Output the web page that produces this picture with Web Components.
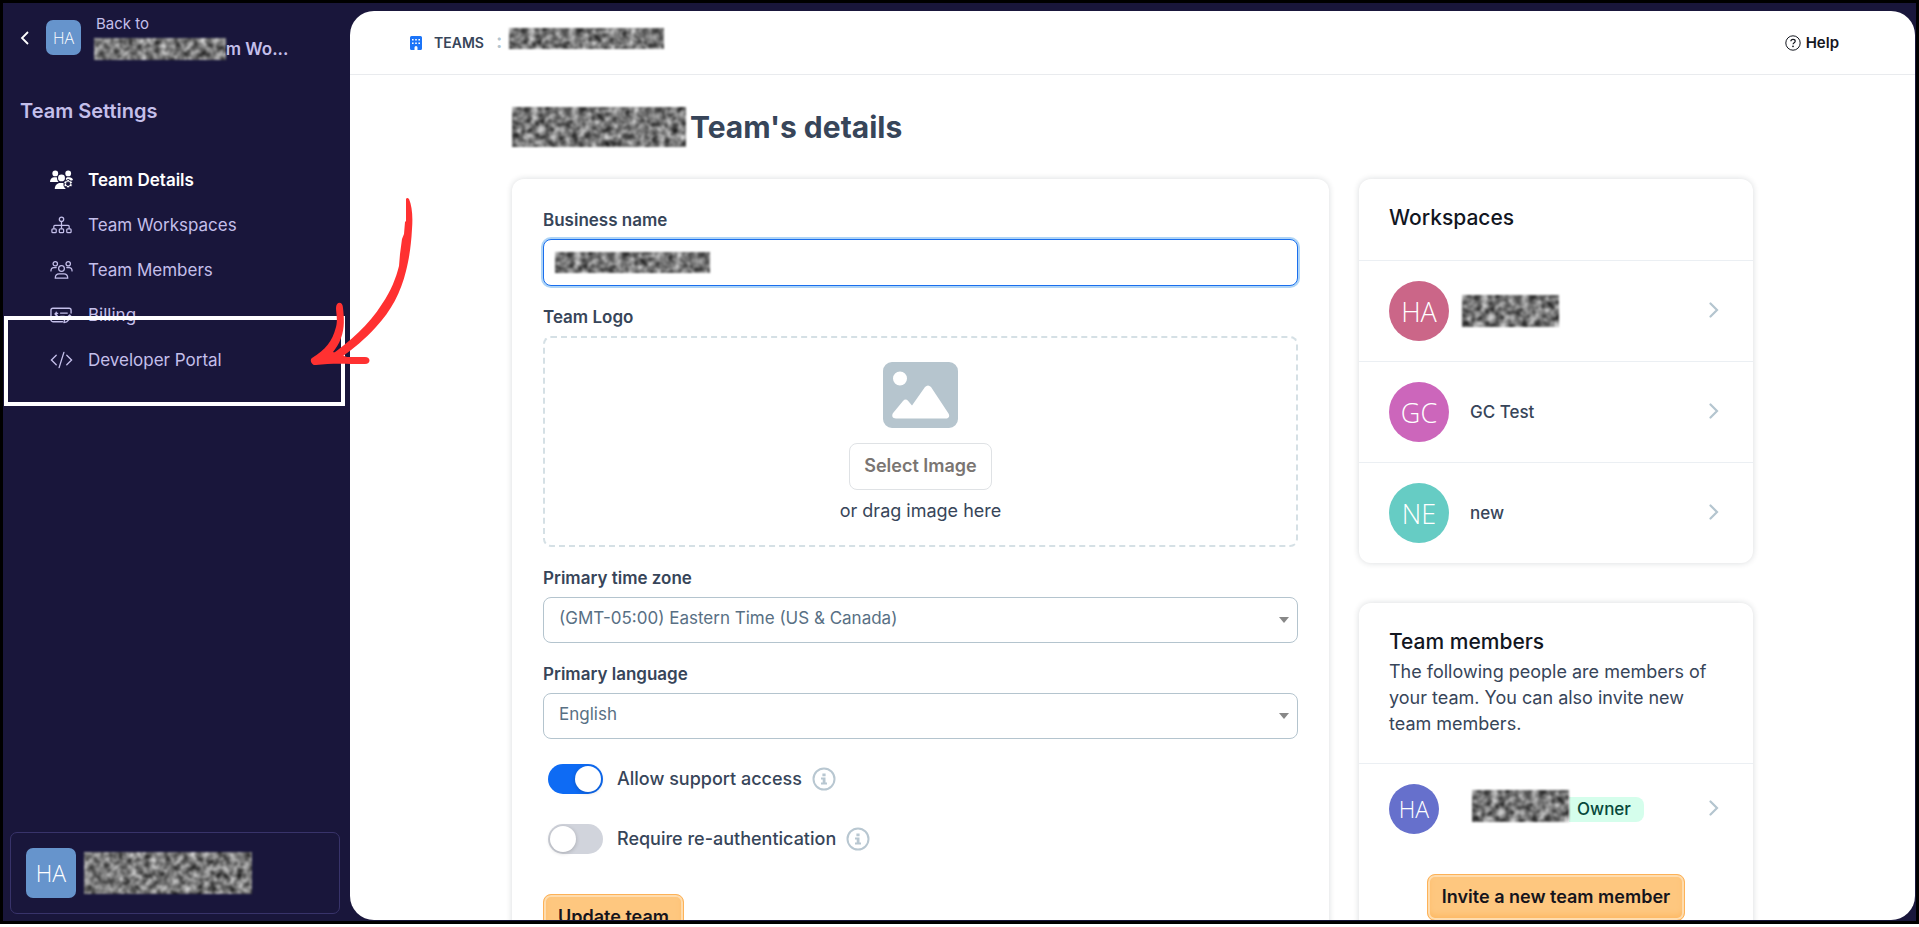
<!DOCTYPE html>
<html lang="en">
<head>
<meta charset="utf-8">
<title>Team Settings</title>
<style>
    body {
        margin: 0;
        background: #fff;
        color: #374559;
        font-family: Inter, "Open Sans", sans-serif;
        font-size: 17px;
        line-height: 20px;
    }
</style>
</head>
<body>
<team-page></team-page>

<script>
const ICONS = {
    back: ['0 0 10 16', '<path d="M8 2 2 8l6 6" fill="none" stroke="currentColor" stroke-width="1.800"/>'],
    next: ['0 0 10 16', '<path d="M1.5 1.5 8 8l-6.500 6.500" fill="none" stroke="currentColor" stroke-width="2.200" stroke-linecap="round"/>'],
    building: ['0 0 12 16', '<path fill="currentColor" fill-rule="evenodd" d="M1.500 1h9A1.500 1.500 0 0 1 12 2.500v11a1.500 1.500 0 0 1-1.500 1.500H7.500v-2.500a1.500 1.500 0 0 0-3 0V15h-3A1.500 1.500 0 0 1 0 13.500v-11A1.500 1.500 0 0 1 1.500 1zM2 4v1.600h1.600V4zm3.200 0v1.600h1.600V4zm3.200 0v1.600H10V4zM2 7.500v1.600h1.600V7.500zm3.200 0v1.600h1.600V7.500zm3.200 0v1.600H10V7.500z"/>'],
    help: ['0 0 16 16', '<g fill="none" stroke="currentColor"><circle cx="8" cy="8" r="7.200"/><path d="M5.900 6.300c0-1.200.9-1.900 2.100-1.900s2.200.7 2.200 1.800c0 1.500-2.100 1.500-2.100 3" stroke-width="1.200"/></g><circle cx="8" cy="11.300" r=".9" fill="currentColor"/>'],
    info: ['0 0 24 24', '<circle cx="12" cy="12" r="10.500" fill="none" stroke="currentColor" stroke-width="2"/><path fill="currentColor" d="M10.400 6.500h3.200v2.700h-3.200zM9 10.500h4.500v5H15v2H9v-2h1.700v-3H9z"/>'],
    image: ['0 0 75 66', '<path fill="currentColor" fill-rule="evenodd" d="M9 0h57a9 9 0 0 1 9 9v48a9 9 0 0 1-9 9H9a9 9 0 0 1-9-9V9a9 9 0 0 1 9-9zm8 9.500a7 7 0 1 0 0 14 7 7 0 0 0 0-14zM20 39 10.500 50.500C8 53.500 9.500 56.500 13 56.500h50c3 0 4-2.500 2.500-5L48 25q-3-3-6 0L29 43.500 25 38.700q-2.500-2.500-5 .3z"/>'],
    details: ['0 0 24 20', '<g fill="currentColor"><circle cx="5.500" cy="3.200" r="3"/><circle cx="19" cy="3.200" r="3"/><circle cx="12" cy="7.800" r="3.600"/><path d="M0 12c0-3.300 2-5 4.500-5H7c.6 0 0 3 2 5zM16.500 9c.2-1.500 1-2 2-2H20c2.200 0 3.500 1 4 3l-2.500 1-2-2-2 2zM5 19.500c0-4 2.500-6.500 5.500-6.500H14l.5 4 2 2.500z"/><path stroke="#19163b" stroke-width=".8" fill-rule="evenodd" d="m18 9.500 2 .1.600 1.500 1.500-.3 1.200 1.700-1 1.300 1 1.500-1.200 1.700-1.600-.3-.7 1.500h-2l-.6-1.500-1.700.3-1-1.700 1-1.500-1-1.300 1-1.700 1.700.3zm.9 2.500a1.900 1.900 0 1 0 0 3.800 1.900 1.900 0 0 0 0-3.800z"/></g>'],
    sitemap: ['0 0 24 20', '<g fill="none" stroke="currentColor" stroke-width="1.300"><circle cx="12" cy="4" r="2.300"/><path d="M12 6.500V14M4 14v-2.500a1 1 0 0 1 1-1h14a1 1 0 0 1 1 1V14"/><rect x="2" y="14" width="4.500" height="4" rx="1"/><rect x="9.700" y="14" width="4.500" height="4" rx="1"/><rect x="17.500" y="14" width="4.500" height="4" rx="1"/></g>'],
    people: ['0 0 24 20', '<g fill="none" stroke="currentColor" stroke-width="1.300" stroke-linecap="round"><circle cx="5.500" cy="3.500" r="2.300"/><circle cx="19" cy="3.500" r="2.300"/><circle cx="12" cy="8.500" r="3"/><path d="M1 11c0-2.500 1.500-3.500 3-3.500h2.500M23 11c0-2.500-1.500-3.500-3-3.500h-2.500M5.500 18.500c0-3.500 2-4.500 4-4.500h5c2 0 4 1 4 4.500z"/></g>'],
    billing: ['0 0 24 20', '<g fill="none" stroke="currentColor" stroke-width="1.400" stroke-linecap="round" stroke-linejoin="round"><path d="M13 17H3a2 2 0 0 1-2-2V5a2 2 0 0 1 2-2h17a2 2 0 0 1 2 2v3M11 8h7M11 11.500h4M6.500 7v6M8 8.300c-3-1-3.500 1.200-1.500 1.700s1.500 2.500-1.500 1.700M14.500 18l.7-3 5.300-5 2 2-5.300 5.200z"/></g>'],
    code: ['0 0 24 20', '<path d="M6.500 5 1.500 10l5 5M17.500 5l5 5-5 5M14.500 2l-5 16" fill="none" stroke="currentColor" stroke-width="1.400" stroke-linecap="round"/>'],
    caret: ['0 0 10 6', '<path d="M0 0h10L5 6z" fill="currentColor"/>']
};

class BaseElement extends HTMLElement {
    constructor() {
        super();
        this.attachShadow({ mode: 'open' });
    }
    connectedCallback() {
        this.shadowRoot.innerHTML = `<style>${this.constructor.styles}</style>${this.markup()}`;
    }
    static get styles() {
        return '';
    }
    markup() {
        return '<slot></slot>';
    }
}

class TeamIcon extends BaseElement {
    static get styles() {
        return /*CSS*/ `
            :host { display: inline-flex; flex: none; }
            svg { display: block; width: 100%; height: 100%; }
        `;
    }
    markup() {
        const [box, body] = ICONS[this.getAttribute('name')];
        return `<svg viewBox="${box}" aria-hidden="true">${body}</svg>`;
    }
}

// Grey noise that covers a private name
class HiddenName extends BaseElement {
    static get styles() {
        return /*CSS*/ `
            :host { display: block; flex: none; filter: blur(1px); }
            svg { display: block; width: 100%; height: 100%; }
        `;
    }
    markup() {
        return /*HTML*/ `
            <svg aria-hidden="true">
                <filter id="noise" x="0" y="0" width="100%" height="100%" color-interpolation-filters="sRGB">
                    <feTurbulence type="fractalNoise" baseFrequency="0.15" numOctaves="2" seed="${this.getAttribute('seed') || 4}"/>
                    <feColorMatrix values="1.1 0 0 0 -0.08  1.1 0 0 0 -0.08  1.1 0 0 0 -0.08  0 0 0 0 1"/>
                </filter>
                <rect width="100%" height="100%" filter="url(#noise)"/>
            </svg>`;
    }
}

class UserAvatar extends BaseElement {
    static get styles() {
        return /*CSS*/ `
            :host {
                display: grid;
                flex: none;
                place-items: center;
                width: 50px;
                height: 50px;
                border-radius: 50%;
                background: #6694cc;
                color: #fff;
                font: 300 23px/1 "Open Sans", sans-serif;
            }
            :host([size="small"]) { width: 35px; height: 35px; font-size: 16px; }
            :host([size="large"]) { width: 60px; height: 60px; font-size: 27px; }
            :host([square]) { border-radius: 7px; }
        `;
    }
}

class NavItem extends BaseElement {
    static get styles() {
        return /*CSS*/ `
            :host { display: block; }
            a {
                display: flex;
                align-items: center;
                gap: 15px;
                height: 45px;
                color: #c4bfea;
                text-decoration: none;
            }
            team-icon { width: 23px; height: 20px; }
            :host([active]) a { color: #fff; font-weight: 600; }
        `;
    }
    markup() {
        return `<a href="#"><team-icon name="${this.getAttribute('icon')}"></team-icon><slot></slot></a>`;
    }
}

class TeamSidebar extends BaseElement {
    static get styles() {
        return /*CSS*/ `
            :host {
                display: flex;
                flex-direction: column;
                box-sizing: border-box;
                padding: 12px 10px 7px 7px;
                color: #c4bfea;
            }
            .back {
                display: flex;
                align-items: center;
                padding-left: 10px;
                color: inherit;
                text-decoration: none;
            }
            .back team-icon { width: 10px; height: 16px; margin-right: 16px; color: #fff; }
            .back user-avatar { margin-right: 13px; }
            .from { display: block; margin-bottom: 5px; padding-left: 2px; font-size: 15px; line-height: 18px; }
            .space { display: flex; align-items: center; font-weight: 600; }
            .space span { margin-left: -10px; }
            .space hidden-name { z-index: 1; width: 132px; height: 22px; }
            h2 { margin: 39px 10px 0; font-size: 20px; line-height: 24px; font-weight: 600; }
            nav { margin: 34px 0 0 40px; }
            .user {
                display: flex;
                align-items: center;
                gap: 8px;
                margin-top: auto;
                padding: 15px;
                border: 1px solid #38336a;
                border-radius: 7px;
            }
            .user hidden-name { width: 168px; height: 42px; }
        `;
    }
    markup() {
        return /*HTML*/ `
            <a class="back" href="#">
                <team-icon name="back"></team-icon>
                <user-avatar square size="small">HA</user-avatar>
                <div>
                    <span class="from">Back to</span>
                    <div class="space"><hidden-name seed="7"></hidden-name><span>am Wo...</span></div>
                </div>
            </a>
            <h2>Team Settings</h2>
            <nav>
                <nav-item icon="details" active>Team Details</nav-item>
                <nav-item icon="sitemap">Team Workspaces</nav-item>
                <nav-item icon="people">Team Members</nav-item>
                <nav-item icon="billing">Billing</nav-item>
                <nav-item icon="code">Developer Portal</nav-item>
            </nav>
            <div class="user"><user-avatar square>HA</user-avatar><hidden-name seed="7"></hidden-name></div>`;
    }
}

class TeamTopbar extends BaseElement {
    static get styles() {
        return /*CSS*/ `
            :host {
                display: flex;
                align-items: center;
                box-sizing: border-box;
                height: 64px;
                padding: 0 76px 0 60px;
                border-bottom: 1px solid #e9ebee;
            }
            .home { display: flex; align-items: center; gap: 12px; color: inherit; font-size: 14px; font-weight: 600; text-decoration: none; }
            .home team-icon { width: 12px; height: 16px; color: #1b74f8; }
            .dots { margin: 0 7px 4px 12px; color: #b4c5cf; font-size: 20px; font-weight: 600; }
            hidden-name { width: 155px; height: 21px; margin-bottom: 8px; }
            button {
                display: flex;
                align-items: center;
                gap: 5px;
                margin-left: auto;
                padding: 0;
                border: 0;
                background: none;
                color: #14171f;
                font: 600 15px/20px Inter, sans-serif;
            }
            button team-icon { width: 16px; height: 16px; }
        `;
    }
    markup() {
        return /*HTML*/ `
            <a class="home" href="#"><team-icon name="building"></team-icon>TEAMS</a>
            <span class="dots">:</span>
            <hidden-name></hidden-name>
            <button type="button"><team-icon name="help"></team-icon>Help</button>`;
    }
}

class TeamCard extends BaseElement {
    static get styles() {
        return /*CSS*/ `
            :host {
                display: block;
                border-radius: 12px;
                background: #fff;
                box-shadow: 0 0 6px rgba(20, 30, 45, .16);
            }
            header { box-sizing: border-box; min-height: 81px; padding: 26px 30px; }
            h2 { margin: 0; color: #12161f; font-size: 21px; line-height: 26px; font-weight: 500; }
            ::slotted(p) { margin: 4px 0 0; font-size: 18px; line-height: 26px; }
        `;
    }
    markup() {
        const heading = this.getAttribute('heading');
        const top = heading ? `<header><h2>${heading}</h2><slot name="intro"></slot></header>` : '';
        return `${top}<slot></slot>`;
    }
}

class ListRow extends BaseElement {
    static get styles() {
        return /*CSS*/ `
            :host {
                display: flex;
                align-items: center;
                gap: 13px;
                padding: 20px 34px 20px 30px;
                border-top: 1px solid #ebeff3;
                font-weight: 500;
            }
            team-icon { width: 10px; height: 16px; margin: 0 0 3px auto; color: #b4c5cf; }
            ::slotted(hidden-name) { width: 97px; height: 32px; }
            ::slotted(span) { padding-left: 8px; }
        `;
    }
    markup() {
        return '<slot></slot><team-icon name="next"></team-icon>';
    }
}

class OwnerName extends BaseElement {
    static get styles() {
        return /*CSS*/ `
            :host { display: flex; align-items: center; padding-left: 20px; }
            hidden-name { width: 97px; height: 32px; margin-bottom: 6px; z-index: 1; }
            span {
                padding: 0 13px 0 8px;
                border-radius: 0 8px 8px 0;
                background: #d5feec;
                color: #07483b;
                line-height: 25px;
            }
        `;
    }
    markup() {
        return '<hidden-name></hidden-name><span><slot></slot></span>';
    }
}

class ActionButton extends BaseElement {
    static get styles() {
        return /*CSS*/ `
            :host { display: inline-block; }
            button {
                height: 47px;
                padding: 0 14px 2px;
                border: 1px solid #fdb258;
                border-radius: 8px;
                background: #fec77f;
                box-shadow: inset 0 0 0 2px #fedcae, inset 0 -4px 6px #fdb760;
                color: #15141c;
                font: 600 18px/20px Inter, sans-serif;
            }
            :host([plain]) button {
                border-color: #dfe2e5;
                background: #fff;
                box-shadow: none;
                color: #7a7572;
            }
        `;
    }
    markup() {
        return '<button type="button"><slot></slot></button>';
    }
}

const FIELD_CSS = /*CSS*/ `
    :host { display: block; }
    label, .label { display: block; margin-bottom: 9px; font-weight: 600; }
`;

class NameField extends BaseElement {
    static get styles() {
        return /*CSS*/ `
            ${FIELD_CSS}
            .box { display: grid; align-items: center; }
            .box > * { grid-area: 1 / 1; }
            input {
                box-sizing: border-box;
                width: 100%;
                height: 47px;
                border: 1px solid #1a6fee;
                border-radius: 8px;
                outline: 0;
                box-shadow: 0 0 0 2px #aed4f6;
            }
            hidden-name { width: 155px; height: 21px; margin-left: 12px; }
        `;
    }
    markup() {
        return /*HTML*/ `
            <label for="name">Business name</label>
            <div class="box"><input id="name" type="text"><hidden-name></hidden-name></div>`;
    }
}

class SelectField extends BaseElement {
    static get styles() {
        return /*CSS*/ `
            ${FIELD_CSS}
            .box { display: grid; align-items: center; }
            .box > * { grid-area: 1 / 1; }
            select {
                appearance: none;
                width: 100%;
                height: 46px;
                padding: 0 30px 4px 15px;
                border: 1px solid #b4c4ce;
                border-radius: 8px;
                background: #fff;
                color: #587084;
                font: inherit;
            }
            team-icon { justify-self: end; width: 10px; height: 6px; margin-right: 9px; color: #888; pointer-events: none; }
        `;
    }
    markup() {
        return /*HTML*/ `
            <label for="choice">${this.getAttribute('label')}</label>
            <div class="box">
                <select id="choice"><option>${this.getAttribute('value')}</option></select>
                <team-icon name="caret"></team-icon>
            </div>`;
    }
}

class LogoField extends BaseElement {
    static get styles() {
        return /*CSS*/ `
            ${FIELD_CSS}
            .drop {
                display: flex;
                flex-direction: column;
                align-items: center;
                padding: 24px;
                border: 2px dashed #d5e0e5;
                border-radius: 8px;
                font-size: 18px;
            }
            team-icon { width: 75px; height: 66px; margin-bottom: 15px; color: #b6c5ce; }
            action-button { margin-bottom: 11px; height: 47px; }
        `;
    }
    markup() {
        return /*HTML*/ `
            <span class="label">Team Logo</span>
            <div class="drop">
                <team-icon name="image"></team-icon>
                <action-button plain>Select Image</action-button>
                <span>or drag image here</span>
            </div>`;
    }
}

class ToggleField extends BaseElement {
    static get styles() {
        return /*CSS*/ `
            :host { display: flex; align-items: center; padding-left: 5px; font-size: 18px; font-weight: 500; }
            input {
                appearance: none;
                display: flex;
                align-items: center;
                width: 55px;
                height: 30px;
                margin: 0 14px 0 0;
                padding: 0 2px;
                box-sizing: border-box;
                border-radius: 15px;
                background: #d1d4dc;
            }
            input::before {
                content: "";
                width: 26px;
                height: 26px;
                border-radius: 50%;
                background: #fff;
                box-shadow: 0 1px 4px rgba(0, 0, 0, .2);
            }
            input:checked { justify-content: flex-end; background: #0e6bf4; }
            team-icon { width: 24px; height: 24px; margin-left: 10px; color: #b8c7d1; }
        `;
    }
    markup() {
        return /*HTML*/ `
            <input id="toggle" type="checkbox" ${this.hasAttribute('checked') ? 'checked' : ''}>
            <label for="toggle"><slot></slot></label>
            <team-icon name="info"></team-icon>`;
    }
}

class TeamForm extends BaseElement {
    static get styles() {
        return /*CSS*/ `
            :host { display: block; padding: 31px; }
            form { display: flex; flex-direction: column; gap: 21px; }
            .toggles { display: flex; flex-direction: column; gap: 30px; margin: 4px 0 19px; }
        `;
    }
    markup() {
        return /*HTML*/ `
            <form>
                <name-field></name-field>
                <logo-field></logo-field>
                <select-field label="Primary time zone" value="(GMT-05:00) Eastern Time (US &amp;amp; Canada)"></select-field>
                <select-field label="Primary language" value="English"></select-field>
                <div class="toggles">
                    <toggle-field checked>Allow support access</toggle-field>
                    <toggle-field>Require re-authentication</toggle-field>
                </div>
                <action-button>Update team</action-button>
            </form>`;
    }
}

class TeamDetails extends BaseElement {
    static get styles() {
        return /*CSS*/ `
            :host { display: block; max-width: 1241px; margin: 0 auto; padding: 32px 24px; }
            h1 {
                display: flex;
                align-items: center;
                gap: 4px;
                margin: 0 0 32px;
                font-size: 30px;
                line-height: 40px;
                font-weight: 700;
            }
            h1 hidden-name { width: 174px; height: 40px; }
            .columns { display: grid; grid-template-columns: minmax(0, 1fr) 394px; gap: 30px; }
            aside { display: grid; align-content: start; gap: 40px; }
            .invite { display: flex; justify-content: center; padding: 20px 0 30px; }
        `;
    }
    markup() {
        return /*HTML*/ `
            <h1><hidden-name></hidden-name>Team's details</h1>
            <div class="columns">
                <team-card><team-form></team-form></team-card>
                <aside>
                    <team-card heading="Workspaces">
                        <list-row><user-avatar size="large" style="background: #cb6688">HA</user-avatar><hidden-name></hidden-name></list-row>
                        <list-row><user-avatar size="large" style="background: #cc66bb">GC</user-avatar><span>GC Test</span></list-row>
                        <list-row><user-avatar size="large" style="background: #66ccc4">NE</user-avatar><span>new</span></list-row>
                    </team-card>
                    <team-card heading="Team members">
                        <p slot="intro">The following people are members of your team. You can also invite new team members.</p>
                        <list-row><user-avatar style="background: #6670cc">HA</user-avatar><owner-name>Owner</owner-name></list-row>
                        <div class="invite"><action-button>Invite a new team member</action-button></div>
                    </team-card>
                </aside>
            </div>`;
    }
}

// White frame and red hand-drawn arrow, laid over the menu
class MenuPointer extends BaseElement {
    static get styles() {
        return /*CSS*/ `
            :host { position: absolute; left: 4px; top: 316px; pointer-events: none; }
            .frame { box-sizing: border-box; width: 341px; height: 90px; border: 4px solid #fff; }
            svg { position: absolute; left: 301px; top: -121px; }
        `;
    }
    markup() {
        return /*HTML*/ `
            <div class="frame"></div>
            <svg width="112" height="176" viewBox="305 195 112 176" aria-hidden="true">
                <path fill="#ff3131" d="M406 199q1-2 3 0c3 7 4 17 3 30-1 18-3 30-6 42-5 21-15 40-30 56-12 13-22 21-33 29l-12-1c18-13 38-30 51-51 9-13 14-26 17-38l1-12 2-15 2-5 1-12 1-1z"/>
                <path fill="#ff3131" d="M312 358c14-9 20-16 24-31 2-7 0-14 0-19 0-7 7-7 7 0 1 9 2 20-2 30-2 6-5 10-8 14l14 5 18 0c6 0 6 7 0 7-18 0-34-1-49 1-4 1-7-5-4-7z"/>
            </svg>`;
    }
}

class TeamPage extends BaseElement {
    static get styles() {
        return /*CSS*/ `
            :host {
                position: relative;
                display: flex;
                box-sizing: border-box;
                height: calc(100vh - 3px);
                padding: 3px;
                background: #000;
            }
            .shell { display: grid; grid-template-columns: 347px minmax(0, 1fr); flex: 1; min-width: 0; background: #19163b; }
            main {
                margin: 8px 1px 1px 0;
                border-radius: 24px;
                background: #fff;
                overflow: hidden;
                min-height: 0;
            }
        `;
    }
    markup() {
        return /*HTML*/ `
            <div class="shell">
                <team-sidebar></team-sidebar>
                <main><team-topbar></team-topbar><team-details></team-details></main>
            </div>
            <menu-pointer></menu-pointer>`;
    }
}

customElements.define('team-icon', TeamIcon);
customElements.define('hidden-name', HiddenName);
customElements.define('user-avatar', UserAvatar);
customElements.define('nav-item', NavItem);
customElements.define('team-sidebar', TeamSidebar);
customElements.define('team-topbar', TeamTopbar);
customElements.define('team-card', TeamCard);
customElements.define('list-row', ListRow);
customElements.define('owner-name', OwnerName);
customElements.define('action-button', ActionButton);
customElements.define('name-field', NameField);
customElements.define('select-field', SelectField);
customElements.define('logo-field', LogoField);
customElements.define('toggle-field', ToggleField);
customElements.define('team-form', TeamForm);
customElements.define('team-details', TeamDetails);
customElements.define('menu-pointer', MenuPointer);
customElements.define('team-page', TeamPage);
</script>
</body>
</html>
